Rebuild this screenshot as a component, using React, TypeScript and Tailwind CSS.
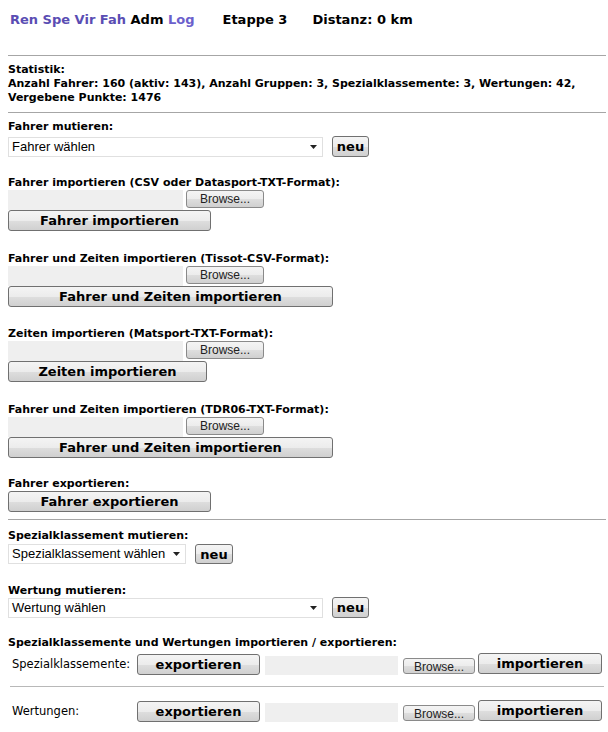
import React from "react";

const btnFace =
  "border border-[#707070] rounded-[3px] bg-[linear-gradient(to_bottom,#f4f4f4_0%,#ececec_50%,#dedede_51%,#d0d0d0_100%)] text-black font-bold text-[13px] leading-none flex items-center justify-center";

function Label({ children }: { children: React.ReactNode }) {
  return <div className="text-[11px] font-bold leading-[14px]">{children}</div>;
}

function Browse({ small }: { small?: boolean }) {
  return (
    <div
      className={
        small
          ? "w-[72px] h-[16px] mt-[5px] ml-[5px] border border-[#8a8a8a] rounded-[3px] bg-[linear-gradient(to_bottom,#f4f4f4_0%,#ececec_50%,#dedede_51%,#d0d0d0_100%)] font-['Liberation_Sans',Arial,sans-serif] text-[12px] text-[#222] flex items-center justify-center pt-[2px]"
          : "w-[78px] h-[18px] ml-[3px] border border-[#8a8a8a] rounded-[3px] bg-[linear-gradient(to_bottom,#f4f4f4_0%,#ececec_50%,#dedede_51%,#d0d0d0_100%)] font-['Liberation_Sans',Arial,sans-serif] text-[12px] text-[#222] flex items-center justify-center"
      }
    >
      Browse...
    </div>
  );
}

function FileRow() {
  return (
    <div className="flex h-[20px] items-start">
      <div className="w-[175px] h-[20px] bg-[#efefef]" />
      <Browse />
    </div>
  );
}

function Select({ text, wide }: { text: string; wide?: boolean }) {
  return (
    <div
      className={
        (wide ? "w-[315px]" : "w-[178px]") +
        " h-[20px] border border-[#e0e0e0] bg-white flex items-center justify-between pl-[3px] pr-[5px] font-['Liberation_Sans',Arial,sans-serif] text-[13px]"
      }
    >
      <span>{text}</span>
      <svg width="7" height="4" viewBox="0 0 7 4">
        <path d="M0 0h7L3.5 4z" fill="#222" />
      </svg>
    </div>
  );
}

function Hr() {
  return <div className="h-px bg-[#a6a6a6]" />;
}

function ImportBlock({ title, action, w, mt }: { title: string; action: string; w: string; mt: string }) {
  return (
    <div className={mt}>
      <Label>{title}</Label>
      <FileRow />
      <div className={w + " h-[21px] " + btnFace}>{action}</div>
    </div>
  );
}

function XferRow({ label }: { label: string }) {
  return (
    <div className="flex items-start h-[24px]">
      <div className="w-[129px] pl-[4px] mt-[4px] text-[11.5px] leading-[14px] font-normal">{label}</div>
      <div className={"w-[123px] h-[21px] mt-[1px] " + btnFace}>exportieren</div>
      <div className="w-[133px] h-[19px] mt-[3px] ml-[5px] bg-[#efefef]" />
      <Browse small />
      <div className={"w-[124px] h-[21px] ml-[3px] " + btnFace}>importieren</div>
    </div>
  );
}

export default function App() {
  return (
    <div className="min-h-[732px] bg-white pl-2 pr-[2px] font-['DejaVu_Sans',Verdana,sans-serif] text-black">
      <div className="h-[55px] pt-[11px] text-[13px] font-bold leading-[18px] whitespace-pre">
        <span className="ml-[2px] text-[#5a4db3]">Ren Spe Vir Fah</span> <span>Adm</span>{" "}
        <span className="text-[#6b60cc]">Log</span>
        <span className="ml-[28px]">Etappe 3</span>
        <span className="ml-[25px]">Distanz: 0 km</span>
      </div>
      <Hr />

      <div className="mt-[7px] text-[11px] font-bold leading-[14px]">
        <div>Statistik:</div>
        <div>
          Anzahl Fahrer: 160 (aktiv: 143), Anzahl Gruppen: 3, Spezialklassemente: 3, Wertungen: 42,
          Vergebene Punkte: 1476
        </div>
      </div>
      <div className="mt-[7px]">
        <Hr />
      </div>

      <div className="mt-[7px]">
        <Label>Fahrer mutieren:</Label>
        <div className="mt-[3px] flex items-start gap-[9px]">
          <Select text="Fahrer wählen" wide />
          <div className={"w-[37px] h-[21px] -mt-[1px] " + btnFace}>neu</div>
        </div>
      </div>

      <div className="mt-[19px]">
        <Label>Fahrer importieren (CSV oder Datasport-TXT-Format):</Label>
        <FileRow />
        <div className={"w-[203px] h-[21px] " + btnFace}>Fahrer importieren</div>
      </div>

      <ImportBlock
        title="Fahrer und Zeiten importieren (Tissot-CSV-Format):"
        action="Fahrer und Zeiten importieren"
        w="w-[325px]"
        mt="mt-[21px]"
      />
      <ImportBlock
        title="Zeiten importieren (Matsport-TXT-Format):"
        action="Zeiten importieren"
        w="w-[199px]"
        mt="mt-[20px]"
      />
      <ImportBlock
        title="Fahrer und Zeiten importieren (TDR06-TXT-Format):"
        action="Fahrer und Zeiten importieren"
        w="w-[325px]"
        mt="mt-[21px]"
      />

      <div className="mt-[19px]">
        <Label>Fahrer exportieren:</Label>
        <div className={"w-[203px] h-[21px] " + btnFace}>Fahrer exportieren</div>
      </div>

      <div className="mt-[7px]">
        <Hr />
      </div>

      <div className="mt-[9px]">
        <Label>Spezialklassement mutieren:</Label>
        <div className="mt-[1px] flex items-start gap-[9px]">
          <Select text="Spezialklassement wählen" />
          <div className={"w-[38px] h-[20px] " + btnFace}>neu</div>
        </div>
      </div>

      <div className="mt-[20px]">
        <Label>Wertung mutieren:</Label>
        <div className="flex items-start gap-[9px]">
          <Select text="Wertung wählen" wide />
          <div className={"w-[37px] h-[21px] -mt-[1px] " + btnFace}>neu</div>
        </div>
      </div>

      <div className="mt-[18px]">
        <Label>Spezialklassemente und Wertungen importieren / exportieren:</Label>
        <div className="mt-[3px]">
          <XferRow label="Spezialklassemente:" />
        </div>
        <div className="mt-[9px] mx-[2px] h-px bg-[#b8b8b8]" />
        <div className="mt-[13px]">
          <XferRow label="Wertungen:" />
        </div>
      </div>
    </div>
  );
}
